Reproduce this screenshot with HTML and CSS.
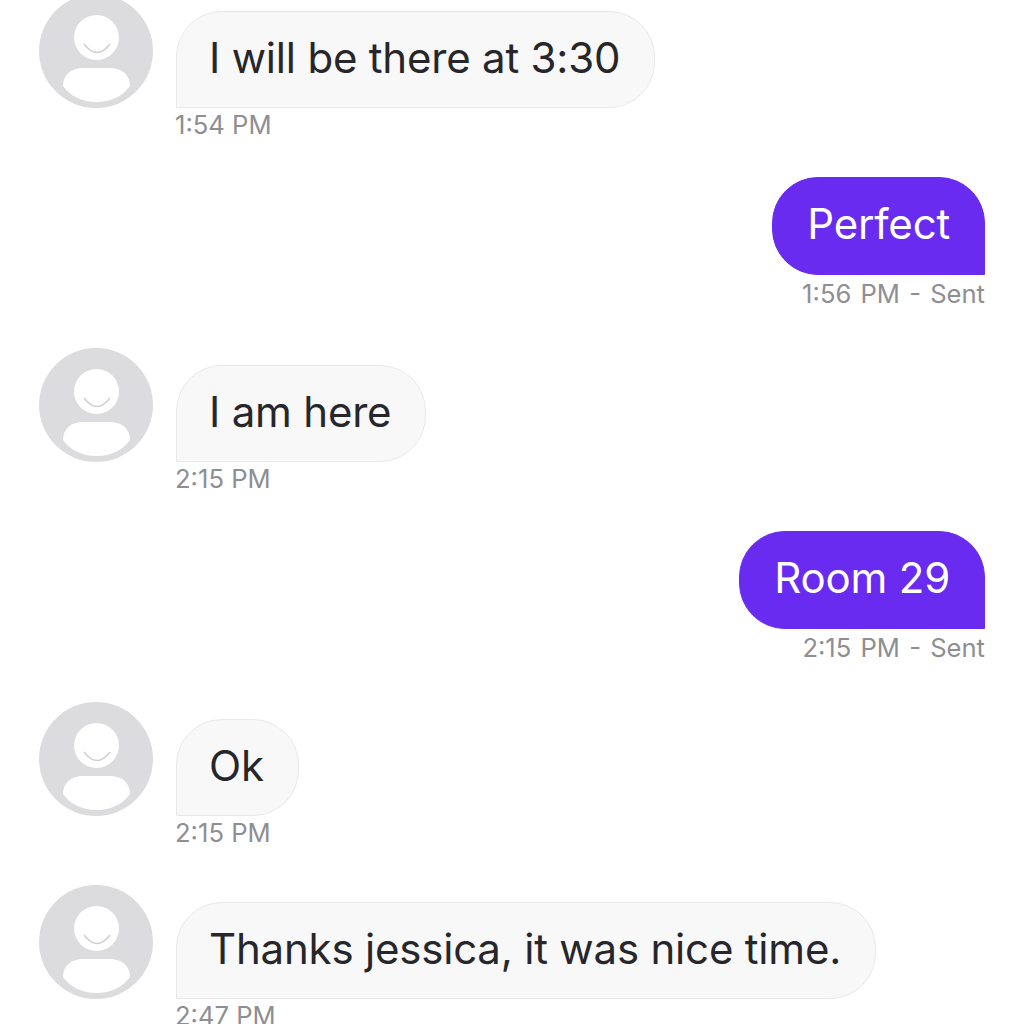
FILE: index.html
```html
<!DOCTYPE html>
<html lang="en">
<head>
    <meta charset="UTF-8">
    <meta name="viewport" content="width=device-width, initial-scale=1.0">
    <title>Messages</title>
    <link rel="stylesheet" href="styles.css">
</head>
<body>
    <svg class="defs" width="0" height="0">
        <symbol id="avatar" viewBox="0 0 114 114">
            <circle cx="57" cy="57" r="57" fill="#dcdcde"/>
            <circle cx="57.5" cy="43.5" r="22.5" fill="#fff"/>
            <path d="M45 50 Q58 67 71 50" fill="none" stroke="#d0d0d2" stroke-width="1.5"/>
            <path d="M24 92 C24 80 33 74 44 74 H71 C82 74 91 80 91 92 C84 102 72 108 57.5 108 C43 108 31 102 24 92 Z" fill="#fff"/>
        </symbol>
    </svg>

    <div class="chat">
        <div class="row in">
            <svg class="avatar"><use href="#avatar"/></svg>
            <div class="body">
                <div class="bubble">I will be there at 3:30</div>
                <div class="time">1:54 PM</div>
            </div>
        </div>

        <div class="row out">
            <div class="body">
                <div class="bubble">Perfect</div>
                <div class="time">1:56 PM - Sent</div>
            </div>
        </div>

        <div class="row in">
            <svg class="avatar"><use href="#avatar"/></svg>
            <div class="body">
                <div class="bubble">I am here</div>
                <div class="time">2:15 PM</div>
            </div>
        </div>

        <div class="row out">
            <div class="body">
                <div class="bubble">Room 29</div>
                <div class="time">2:15 PM - Sent</div>
            </div>
        </div>

        <div class="row in">
            <svg class="avatar"><use href="#avatar"/></svg>
            <div class="body">
                <div class="bubble">Ok</div>
                <div class="time">2:15 PM</div>
            </div>
        </div>

        <div class="row in">
            <svg class="avatar"><use href="#avatar"/></svg>
            <div class="body">
                <div class="bubble">Thanks jessica, it was nice time.</div>
                <div class="time">2:47 PM</div>
            </div>
        </div>
    </div>
</body>
</html>
```

FILE: styles.css
```css
html, body {
    height: 100%;
    margin: 0;
    overflow: hidden;
    background-color: #fff;
}
body {
    font-family: Inter, "Noto Sans", sans-serif;
}
.defs {
    display: block;
}
.chat {
    display: flex;
    flex-direction: column;
    gap: 35px;
    margin-top: -6px;
    padding: 0 39px;
}
.row {
    display: flex;
}
.row.in {
    gap: 23px;
}
.row.out {
    justify-content: flex-end;
    margin-bottom: 4px;
}
.avatar {
    flex: none;
    width: 114px;
    height: 114px;
}
.in .body {
    padding-top: 17px;
}
.out .body {
    display: flex;
    flex-direction: column;
    align-items: flex-end;
}
.bubble {
    box-sizing: border-box;
    height: 97px;
    padding: 0 34px 0 32px;
    font-size: 42px;
    line-height: 91px;
    letter-spacing: -0.2px;
    color: #26262b;
    background-color: #f8f8f8;
    border: 1px solid #e9e9eb;
    border-radius: 46px 46px 46px 0;
    width: fit-content;
    white-space: nowrap;
}
.out .bubble {
    height: 98px;
    padding: 0 34px;
    line-height: 92px;
    color: #fff;
    background-color: #6a2bf0;
    border-color: #6a2bf0;
    border-radius: 46px 46px 0 46px;
}
.time {
    height: 34px;
    margin-left: -1px;
    font-size: 25.6px;
    line-height: 34px;
    color: #8e8e93;
}
.out .time {
    line-height: 38px;
    word-spacing: 2px;
}
```
